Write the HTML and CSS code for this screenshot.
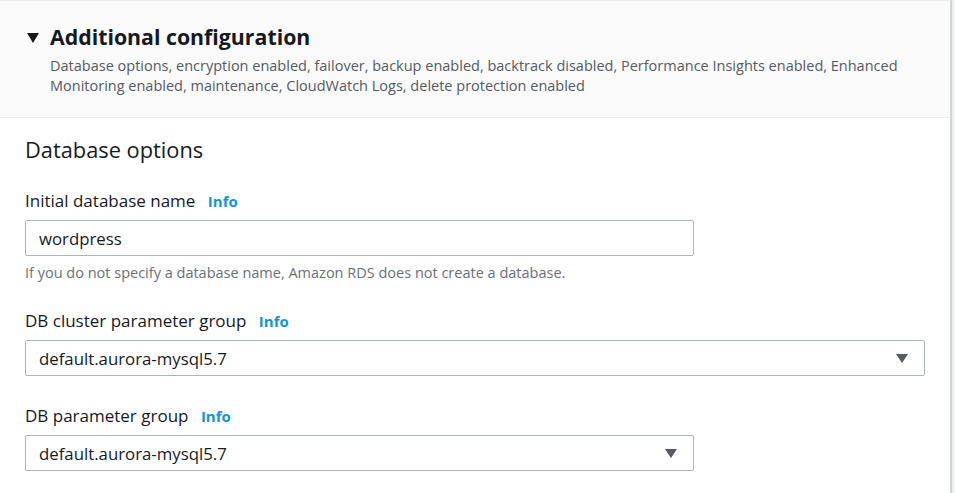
FILE: index.html
```html
<!DOCTYPE html>
<html lang="en">
<head>
<meta charset="utf-8">
<title>Additional configuration</title>
<link rel="stylesheet" href="styles.css">
</head>
<body>
<div class="page">
  <section class="card">
    <header class="card-header">
      <span class="caret" aria-hidden="true"></span>
      <div class="header-text">
        <h2 class="title">Additional configuration</h2>
        <p class="desc">Database options, encryption enabled, failover, backup enabled, backtrack disabled, Performance Insights enabled, Enhanced Monitoring enabled, maintenance, CloudWatch Logs, delete protection enabled</p>
      </div>
    </header>
    <div class="card-body">
      <h3 class="section-title">Database options</h3>

      <div class="field first">
        <div class="label">Initial database name <a class="info">Info</a></div>
        <div class="control narrow"><span class="value">wordpress</span></div>
        <div class="hint">If you do not specify a database name, Amazon RDS does not create a database.</div>
      </div>

      <div class="field">
        <div class="label">DB cluster parameter group <a class="info">Info</a></div>
        <div class="control wide select"><span class="value">default.aurora-mysql5.7</span><span class="arrow"></span></div>
      </div>

      <div class="field last">
        <div class="label">DB parameter group <a class="info">Info</a></div>
        <div class="control narrow select"><span class="value">default.aurora-mysql5.7</span><span class="arrow"></span></div>
      </div>
    </div>
  </section>
</div>
</body>
</html>
```

FILE: styles.css
```css
* { box-sizing: border-box; }
html, body { margin: 0; padding: 0; }
body {
  background: #f2f3f3;
  font-family: "Open Sans", "Noto Sans", sans-serif;
  color: #16191f;
  height: 493px;
  overflow: hidden;
}
.page {
  padding-right: 4px;
}
.card {
  margin-left: -1px;
  background: #ffffff;
  border: 1px solid #eaeded;
  border-right-color: #d5dbdb;
  box-shadow: 1px 0 1px rgba(0,28,36,0.15);
  height: 520px;
}
.card-header {
  display: flex;
  align-items: flex-start;
  background: #fafafa;
  border-bottom: 1px solid #eaeded;
  padding: 22px 30px 22px 27px;
}
.caret {
  width: 0;
  height: 0;
  border-left: 6px solid transparent;
  border-right: 6px solid transparent;
  border-top: 10px solid #16191f;
  margin-top: 10px;
  margin-right: 11px;
  flex: none;
}
.title {
  margin: 0;
  font-size: 21.3px;
  line-height: 28px;
  font-weight: 700;
  color: #16191f;
}
.desc {
  margin: 5px 0 0;
  font-size: 14.5px;
  line-height: 19.5px;
  color: #545b64;
}
.card-body {
  padding: 20px 25px 0;
}
.section-title {
  margin: 0;
  font-size: 21.8px;
  line-height: 24px;
  font-weight: 400;
  color: #16191f;
}
.field {
  margin-top: 27px;
}
.field.first {
  margin-top: 28px;
}
.field.last {
  margin-top: 29px;
}
.label {
  font-size: 17px;
  line-height: 22px;
  color: #16191f;
  margin-bottom: 8px;
}
.info {
  font-size: 15px;
  font-weight: 700;
  color: #1596d0;
  margin-left: 8px;
}
.control {
  display: flex;
  align-items: center;
  height: 36px;
  border: 1px solid #aab7b8;
  border-radius: 2px;
  padding: 0 16px 0 13px;
  background: #fff;
}
.narrow { width: 669px; }
.wide { width: 900px; }
.value {
  flex: 1;
  font-size: 16.8px;
  color: #16191f;
}
.arrow {
  width: 0;
  height: 0;
  border-left: 6px solid transparent;
  border-right: 6px solid transparent;
  border-top: 9px solid #545b64;
}
.hint {
  margin-top: 7px;
  font-size: 14.5px;
  line-height: 20px;
  color: #687078;
}
```
